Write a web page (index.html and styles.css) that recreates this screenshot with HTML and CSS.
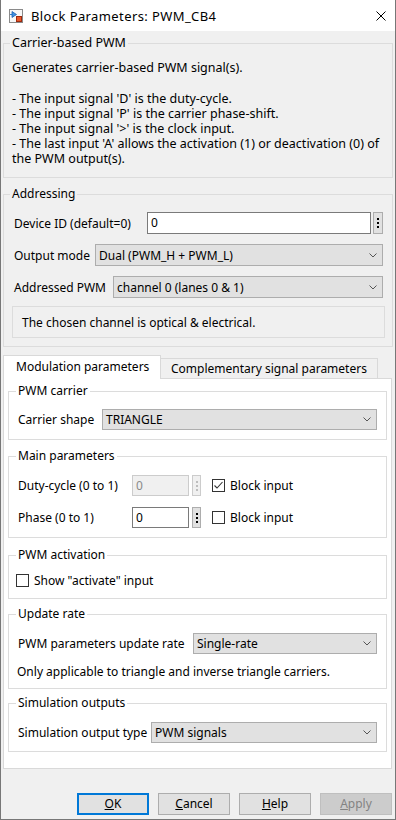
FILE: index.html
```html
<!DOCTYPE html>
<html lang="en">
<head>
    <meta charset="UTF-8">
    <meta name="viewport" content="width=device-width, initial-scale=1.0">
    <title>Block Parameters: PWM_CB4</title>
    <link rel="stylesheet" href="styles.css">
</head>
<body>
    <div class="window">
        <div class="titlebar">
            <svg class="app-icon" width="14" height="14" viewBox="0 0 14 14">
                <rect x="0.5" y="0.5" width="13" height="13" fill="#f7f7f7" stroke="#8a8a8a"/>
                <path d="M1 5.5 H3" stroke="#2f7fd0" stroke-width="1"/>
                <path d="M3 2.5 L3 8.5 L7.5 5.5 Z" fill="#3d8fe0" stroke="#1f62b0" stroke-width="0.8"/>
                <rect x="7.5" y="7.5" width="5" height="5" fill="#e8582a" stroke="#9c2a10"/>
            </svg>
            <span class="title">Block Parameters: PWM_CB4</span>
            <svg class="close" width="10" height="10" viewBox="0 0 10 10">
                <path d="M0.5 0.5 L9.5 9.5 M9.5 0.5 L0.5 9.5" stroke="#000" stroke-width="1"/>
            </svg>
        </div>

        <div class="dialog">
            <fieldset class="group desc">
                <legend>Carrier-based PWM</legend>
                <p class="intro">Generates carrier-based PWM signal(s).</p>
                <p>- The input signal 'D' is the duty-cycle.<br>
                - The input signal 'P' is the carrier phase-shift.<br>
                - The input signal '&gt;' is the clock input.<br>
                - The last input 'A' allows the activation (1) or deactivation (0) of<br>
                the PWM output(s).</p>
            </fieldset>

            <fieldset class="group addressing">
                <legend>Addressing</legend>
                <div class="rows">
                    <div class="row">
                        <label class="lbl-device">Device ID (default=0)</label>
                        <div class="edit grow">0</div>
                        <div class="more"><span></span><span></span><span></span></div>
                    </div>
                    <div class="row">
                        <label class="lbl-output">Output mode</label>
                        <div class="combo">Dual (PWM_H + PWM_L)<svg class="arrow" width="8" height="5" viewBox="0 0 8 5"><polyline points="0.5,0.5 4,4 7.5,0.5" fill="none" stroke="#555"/></svg></div>
                    </div>
                    <div class="row">
                        <label class="lbl-addressed">Addressed PWM</label>
                        <div class="combo">channel 0 (lanes 0 &amp; 1)<svg class="arrow" width="8" height="5" viewBox="0 0 8 5"><polyline points="0.5,0.5 4,4 7.5,0.5" fill="none" stroke="#555"/></svg></div>
                    </div>
                </div>
                <div class="info">The chosen channel is optical &amp; electrical.</div>
            </fieldset>

            <div class="tabs">
                <div class="tab active">Modulation parameters</div>
                <div class="tab">Complementary signal parameters</div>
            </div>

            <div class="tab-page">
                <fieldset class="group inner carrier">
                    <legend>PWM carrier</legend>
                    <div class="row">
                        <label class="lbl-carrier">Carrier shape</label>
                        <div class="combo">TRIANGLE<svg class="arrow" width="8" height="5" viewBox="0 0 8 5"><polyline points="0.5,0.5 4,4 7.5,0.5" fill="none" stroke="#555"/></svg></div>
                    </div>
                </fieldset>

                <fieldset class="group inner main">
                    <legend>Main parameters</legend>
                    <div class="rows">
                        <div class="row param">
                            <label class="param-label">Duty-cycle (0 to 1)</label>
                            <div class="edit small disabled">0</div>
                            <div class="more disabled"><span></span><span></span><span></span></div>
                            <div class="check">
                                <span class="box"><svg width="11" height="11" viewBox="0 0 11 11"><polyline points="1.5,5.5 4,8 9.5,2" fill="none" stroke="#333" stroke-width="1.1"/></svg></span>
                                Block input
                            </div>
                        </div>
                        <div class="row param">
                            <label class="param-label">Phase (0 to 1)</label>
                            <div class="edit small">0</div>
                            <div class="more"><span></span><span></span><span></span></div>
                            <div class="check">
                                <span class="box"></span>
                                Block input
                            </div>
                        </div>
                    </div>
                </fieldset>

                <fieldset class="group inner activation">
                    <legend>PWM activation</legend>
                    <div class="check solo">
                        <span class="box"></span>
                        Show "activate" input
                    </div>
                </fieldset>

                <fieldset class="group inner update">
                    <legend>Update rate</legend>
                    <div class="row">
                        <label class="lbl-update">PWM parameters update rate</label>
                        <div class="combo">Single-rate<svg class="arrow" width="8" height="5" viewBox="0 0 8 5"><polyline points="0.5,0.5 4,4 7.5,0.5" fill="none" stroke="#555"/></svg></div>
                    </div>
                    <p class="note">Only applicable to triangle and inverse triangle carriers.</p>
                </fieldset>

                <fieldset class="group inner sim">
                    <legend>Simulation outputs</legend>
                    <div class="row">
                        <label class="lbl-sim">Simulation output type</label>
                        <div class="combo">PWM signals<svg class="arrow" width="8" height="5" viewBox="0 0 8 5"><polyline points="0.5,0.5 4,4 7.5,0.5" fill="none" stroke="#555"/></svg></div>
                    </div>
                </fieldset>
            </div>

            <div class="buttons">
                <button class="btn default"><u>O</u>K</button>
                <button class="btn"><u>C</u>ancel</button>
                <button class="btn"><u>H</u>elp</button>
                <button class="btn" disabled><u>A</u>pply</button>
            </div>
        </div>
    </div>
</body>
</html>
```

FILE: styles.css
```css
* {
    box-sizing: border-box;
}

body {
    margin: 0;
    font-family: "Noto Sans", "Open Sans", sans-serif;
    font-size: 12px;
    color: #000;
}

.window {
    width: 396px;
    height: 820px;
    border: 1px solid #777;
    border-top: none;
    background-color: #f0f0f0;
    display: flex;
    flex-direction: column;
}

.titlebar {
    height: 31px;
    background-color: #fff;
    display: flex;
    align-items: center;
    padding: 0 9px 0 8px;
}

.app-icon {
    margin-right: 8px;
}

.title {
    flex: 1;
    font-size: 13px;
    letter-spacing: 0.4px;
    line-height: 16px;
}

.dialog {
    padding: 0 2px;
    display: flex;
    flex-direction: column;
}

/* group boxes */
.group {
    border: 1px solid #dcdcdc;
    margin: 8px 0 0;
    padding: 10px 7px 8px 8px;
    min-width: 0;
}

.group legend {
    padding: 0 2px;
    margin-left: -2px;
    line-height: 16px;
}

.desc {
    margin-top: 4px;
    padding-top: 9px;
    padding-bottom: 11px;
}

.desc legend {
    font-size: 12.5px;
}

.desc p {
    margin: 0;
    font-size: 12.5px;
    line-height: 15px;
    white-space: nowrap;
}

.desc .intro {
    margin-bottom: 16px;
}

.rows {
    display: flex;
    flex-direction: column;
    gap: 10px;
}

.row {
    display: flex;
    align-items: center;
    height: 22px;
}

.row label {
    white-space: nowrap;
    flex-shrink: 0;
}

.addressing .row {
    padding-right: 2px;
}

.addressing .row label {
    padding-left: 2px;
}

/* label columns, as placed in the dialog */
.lbl-device {
    width: 135px;
}

.lbl-output {
    width: 83px;
}

.lbl-addressed {
    width: 101px;
}

.lbl-carrier {
    width: 84px;
}

.lbl-update {
    width: 175px;
}

.lbl-sim {
    width: 133px;
}

.edit {
    height: 100%;
    background-color: #fff;
    border: 1px solid #7a7a7a;
    padding-left: 3px;
    line-height: 19px;
}

.grow {
    flex: 1;
}

.edit.small {
    width: 57px;
}

.edit.disabled {
    background-color: #f0f0f0;
    border-color: #cccccc;
    color: #8a8a8a;
}

.more {
    width: 10px;
    height: 100%;
    margin-left: 2px;
    border: 1px solid #adadad;
    background-color: #e1e1e1;
    display: flex;
    flex-direction: column;
    align-items: center;
    justify-content: center;
    gap: 2px;
}

.more span {
    width: 2px;
    height: 2px;
    background-color: #000;
}

.more.disabled {
    border-color: #cccccc;
    background-color: #f0f0f0;
}

.more.disabled span {
    background-color: #bdbdbd;
}

.combo {
    flex: 1;
    height: 100%;
    background-color: #e1e1e1;
    border: 1px solid #adadad;
    padding: 0 5px 0 3px;
    display: flex;
    align-items: center;
    justify-content: space-between;
    white-space: nowrap;
}

.info {
    margin-top: 8px;
    height: 32px;
    border: 1px solid #dcdcdc;
    padding-left: 9px;
    display: flex;
    align-items: center;
}

/* tabs */
.tabs {
    display: flex;
    align-items: flex-end;
    margin: 8px 0 0 0;
}

.tab {
    height: 20px;
    border: 1px solid #d9d9d9;
    border-bottom: none;
    border-left: none;
    background-color: #f0f0f0;
    width: 217px;
    padding-left: 10px;
    line-height: 19px;
    white-space: nowrap;
}

.tab.active {
    position: relative;
    z-index: 1;
    height: 24px;
    width: 158px;
    margin-bottom: -1px;
    border-left: 1px solid #d9d9d9;
    background-color: #fff;
    padding-left: 12px;
    line-height: 22px;
}

.tab-page {
    background-color: #fff;
    border: 1px solid #d9d9d9;
    margin-right: 1px;
    padding: 4px 4px 16px;
}

.inner {
    padding: 11px 9px 8px 9px;
}

.inner:first-child {
    margin-top: 0;
}

.carrier {
    padding-top: 10px;
    padding-bottom: 9px;
}

.carrier .row,
.update .row,
.sim .row,
.main .row {
    height: 21px;
}

.main .rows {
    gap: 11px;
}

.main {
    padding-bottom: 9px;
}

.param-label {
    width: 114px;
}

.param .more {
    margin-left: 3px;
    width: 9px;
}

.check {
    display: flex;
    align-items: center;
    gap: 5px;
    margin-left: 11px;
    white-space: nowrap;
}

.box {
    width: 13px;
    height: 13px;
    border: 1px solid #333;
    background-color: #fff;
    display: flex;
    align-items: center;
    justify-content: center;
}

.activation {
    margin-top: 9px;
    padding-top: 9px;
    padding-bottom: 9px;
}

.check.solo {
    height: 17px;
    margin-left: -2px;
}

.update {
    margin-top: 7px;
    padding-bottom: 8px;
}

.note {
    margin: 10px 0 0 -1px;
    line-height: 16px;
    white-space: nowrap;
}

.sim {
    margin-top: 6px;
}

/* dialog buttons */
.buttons {
    display: flex;
    justify-content: flex-end;
    gap: 9px;
    margin-top: 24px;
    padding-right: 1px;
}

.btn {
    width: 72px;
    height: 22px;
    font-family: inherit;
    font-size: 12px;
    color: #000;
    background-color: #e1e1e1;
    border: 1px solid #adadad;
    padding: 0;
    line-height: 18px;
}

.btn.default {
    border: 2px solid #0078d7;
}

.btn:disabled {
    background-color: #cccccc;
    border-color: #bfbfbf;
    color: #838383;
}
```
